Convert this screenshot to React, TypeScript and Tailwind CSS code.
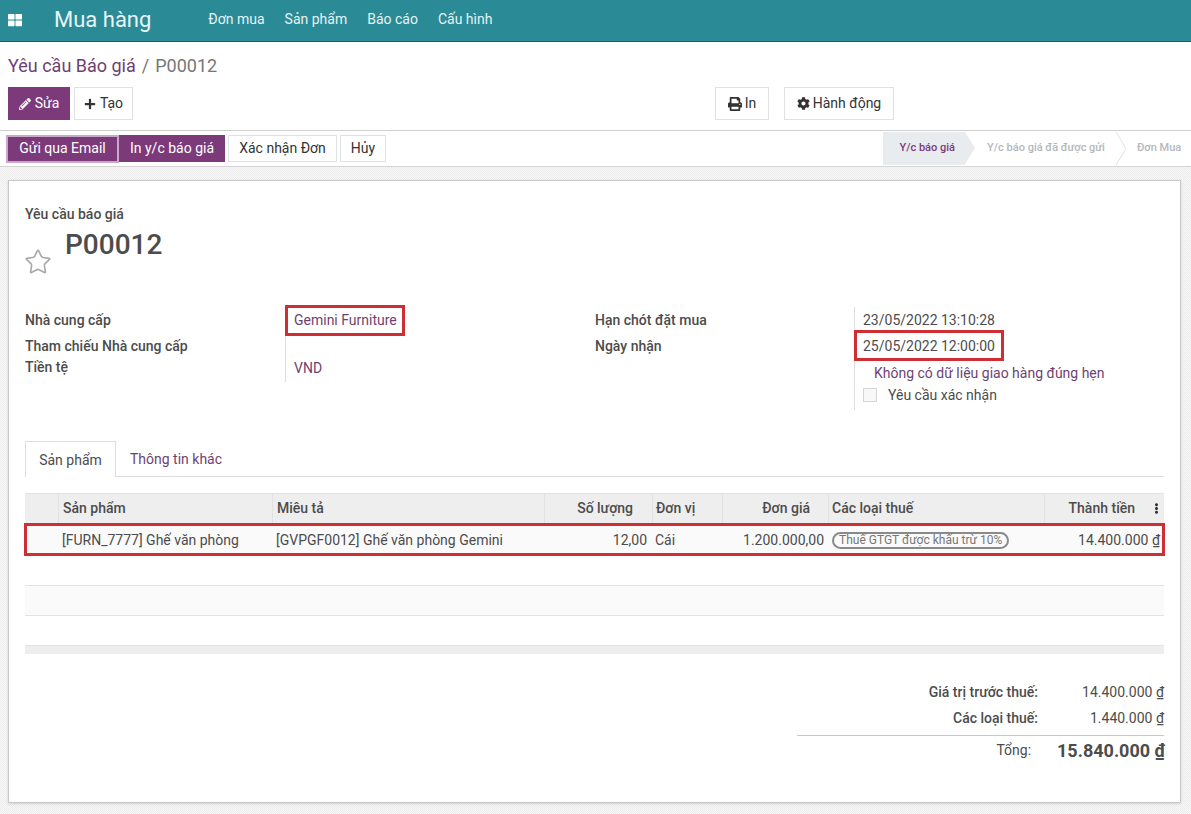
import React from 'react'
import { FaThLarge, FaPencilAlt, FaPlus, FaPrint, FaCog, FaEllipsisV } from 'react-icons/fa'
import { Star } from 'lucide-react'

const GRID = 'grid grid-cols-[34px_214px_272px_108px_70px_106px_216px_119px]'

const Dong = () => <span className="underline">₫</span>

const HeaderCell = ({ label, className = '' }: { label?: string; className?: string }) => (
  <div className={`flex h-full items-center border-r border-[#e2e2e2] pb-[1px] font-medium text-[#4c4c4c] ${className}`}>
    {label}
  </div>
)

export default function App() {
  return (
    <div className="flex h-[814px] w-[1191px] flex-col overflow-hidden bg-white font-['Roboto',sans-serif] text-[14px] text-[#4c4c4c]">
      {/* Top nav */}
      <nav className="flex h-[42px] shrink-0 items-center border-b border-[#1f5f68] bg-[#2a8a96] pb-[2px] text-white">
        <FaThLarge className="ml-[8px] text-[14px]" />
        <span className="ml-[32px] text-[22px] font-normal text-[#e6f6f6]">Mua hàng</span>
        <div className="ml-[57px] flex gap-5 text-[14px] text-[#e6f3f4]">
          <span>Đơn mua</span>
          <span>Sản phẩm</span>
          <span>Báo cáo</span>
          <span>Cấu hình</span>
        </div>
      </nav>

      {/* Control panel */}
      <div className="flex h-[89px] shrink-0 flex-col border-b border-[#cfcfcf] px-2 pt-[12px]">
        <div className="text-[18px] leading-[24px]">
          <span className="text-[#6f3f72]">Yêu cầu Báo giá</span>
          <span className="mx-[6px] text-[#777]">/</span>
          <span className="text-[#777]">P00012</span>
        </div>
        <div className="mt-[9px] flex h-[33px]">
          <button className="flex w-[62px] items-center justify-center gap-1 bg-[#7c3a7a] text-white">
            <FaPencilAlt className="text-[12px] text-[#eee]" /> Sửa
          </button>
          <button className="ml-1 flex w-[59px] items-center justify-center gap-1 border border-[#dee2e6] text-[#333]">
            <FaPlus className="text-[12px]" /> Tạo
          </button>
          <button className="ml-[582px] flex w-[54px] items-center justify-center gap-[3px] border border-[#dee2e6] text-[#333]">
            <FaPrint className="text-[14px]" /> In
          </button>
          <button className="ml-[15px] flex w-[110px] items-center justify-center gap-[3px] border border-[#dee2e6] text-[#333]">
            <FaCog className="text-[13px]" /> Hành động
          </button>
        </div>
      </div>

      {/* Status bar */}
      <div className="flex h-[36px] shrink-0 items-center justify-between border-b border-[#d4d4d4] pl-[6px] pr-[7px]">
        <div className="flex h-[27px] items-center">
          <button className="h-[28px] w-[113px] border-2 border-[#c9a9c9] bg-[#7c3a7a] text-white">Gửi qua Email</button>
          <button className="h-[27px] w-[106px] bg-[#7c3a7a] text-white">In y/c báo giá</button>
          <button className="ml-[3px] h-[27px] w-[109px] border border-[#dee2e6] text-[#333]">Xác nhận Đơn</button>
          <button className="ml-[3px] h-[27px] w-[46px] border border-[#dee2e6] text-[#333]">Hủy</button>
        </div>
        <div className="flex h-[33px] items-center text-[11px] font-medium">
          <div className="relative flex h-full w-[82px] items-center justify-end bg-[#e9ecef] pr-[10px] text-[#7c3a7a]">
            Y/c báo giá
            <span className="absolute -right-[10px] top-0 h-0 w-0 border-y-[16.5px] border-l-[10px] border-y-transparent border-l-[#e9ecef]" />
          </div>
          <div className="flex w-[150px] items-center justify-center pl-[12px] text-[#b4b8bc]">Y/c báo giá đã được gửi</div>
          <svg width="12" height="33" viewBox="0 0 12 33" className="shrink-0">
            <path d="M1 0 L11 16.5 L1 33" fill="none" stroke="#dee2e6" />
          </svg>
          <div className="w-[57px] pl-[10px] text-[#b4b8bc]">Đơn Mua</div>
        </div>
      </div>

      {/* Sheet */}
      <div className="flex-1 bg-[repeating-conic-gradient(#ececec_0_25%,#f8f8f8_0_50%)] bg-[length:2px_2px] px-2 pb-3 pt-[13px]">
        <div className="h-[623px] w-[1173px] border border-[#c8c8c8] bg-white pl-4 pr-4 pt-[25px] shadow-sm">
          <div className="font-medium leading-[16px] text-[#4c4c4c]">Yêu cầu báo giá</div>
          <div className="flex h-[47px] items-start">
            <Star size={28} strokeWidth={1.4} className="-ml-px mt-[26px] shrink-0 text-[#a9a9a9]" />
            <h1 className="ml-[13px] mt-[4px] text-[28px] font-medium leading-[38px] text-[#4c4c4c]">P00012</h1>
          </div>

          {/* Fields */}
          <div className="mt-[38px] flex h-[118px]">
            <div className="flex w-[570px]">
              <div className="w-[260px] font-medium">
                <div className="h-[26px] leading-[26px]">Nhà cung cấp</div>
                <div className="h-[21px] leading-[26px]">Tham chiếu Nhà cung cấp</div>
                <div className="h-[21px] leading-[26px]">Tiền tệ</div>
              </div>
              <div className="h-[75px] border-l border-[#dddddd] pl-[8px] text-[#6f3f72]">
                <div className="inline-flex h-[31px] -translate-x-[9px] -translate-y-[2px] items-center border-[3px] border-[#cf2f33] pb-[2px] pl-[6px] pr-[5px] leading-none">Gemini Furniture</div>
                <div className="mt-[17px] leading-[26px]">VND</div>
              </div>
            </div>
            <div className="flex">
              <div className="w-[259px] font-medium">
                <div className="h-[26px] leading-[26px]">Hạn chót đặt mua</div>
                <div className="h-[26px] leading-[26px]">Ngày nhận</div>
              </div>
              <div className="h-[103px] border-l border-[#dddddd] pl-[8px]">
                <div className="h-[26px] leading-[26px]">23/05/2022 13:10:28</div>
                <div className="inline-flex h-[31px] -translate-x-[9px] -translate-y-[3px] items-center border-[3px] border-[#cf2f33] px-[6px] pt-[2px]">25/05/2022 12:00:00</div>
                <div className="-mt-[1px] ml-[11px] leading-[20px] text-[#6f3f72]">Không có dữ liệu giao hàng đúng hẹn</div>
                <div className="mt-[2px] flex h-[20px] items-center">
                  <span className="h-[14px] w-[14px] border border-[#d5d5d5] bg-[#f8f8f8]" />
                  <span className="ml-[11px]">Yêu cầu xác nhận</span>
                </div>
              </div>
            </div>
          </div>

          {/* Tabs */}
          <div className="mt-[16px] flex h-[36px] border-b border-[#dddddd]">
            <div className="h-[36px] w-[91px] border-x border-t border-[#dddddd] bg-white text-center leading-[37px]">Sản phẩm</div>
            <div className="ml-[14px] leading-[37px] text-[#6f3f72]">Thông tin khác</div>
          </div>

          {/* Lines table */}
          <div className="mt-[16px] w-[1139px]">
            <div className={`${GRID} h-[30px] items-center border-t border-[#e2e2e2] bg-[#eeeeee]`}>
              <HeaderCell />
              <HeaderCell label="Sản phẩm" className="pl-[4px]" />
              <HeaderCell label="Miêu tả" className="pl-[4px]" />
              <HeaderCell label="Số lượng" className="justify-end pr-[19px]" />
              <HeaderCell label="Đơn vị" className="pl-[3px]" />
              <HeaderCell label="Đơn giá" className="justify-end pr-[18px]" />
              <HeaderCell label="Các loại thuế" className="pl-[3px]" />
              <div className="flex h-full items-center justify-end pb-[1px] font-medium">
                <span>Thành tiền</span>
                <FaEllipsisV className="ml-[16px] mr-[2px] text-[11px] text-[#333]" />
              </div>
            </div>
            <div className={`${GRID} -mx-px h-[33px] w-[1141px] items-center border-[3px] border-[#cf2f33] bg-[#fafafa] pt-[1px]`}>
              <div />
              <div className="pl-[1px]">[FURN_7777] Ghế văn phòng</div>
              <div className="pl-[1px]">[GVPGF0012] Ghế văn phòng Gemini</div>
              <div className="pr-[8px] text-right">12,00</div>
              <div>Cái</div>
              <div className="pr-[7px] text-right">1.200.000,00</div>
              <div className="flex pl-[1px]">
                <span className="inline-flex h-[17px] items-center rounded-full border-2 border-[#8a8a8a] px-[5px] text-[12px] leading-none text-[#777]">Thuế GTGT được khấu trừ 10%</span>
              </div>
              <div className="pr-[6px] text-right">14.400.000 <Dong /></div>
            </div>
            <div className="h-[30px] border-b border-[#e2e2e2]" />
            <div className="h-[30px] border-b border-[#e2e2e2] bg-[#fafafa]" />
            <div className="h-[30px] border-b border-[#e2e2e2]" />
            <div className="h-[8px] bg-[#eeeeee]" />
          </div>

          {/* Totals */}
          <div className="ml-auto mt-[26px] w-[367px]">
            <div className="flex h-[24px] items-center justify-end">
              <span className="font-medium">Giá trị trước thuế:</span>
              <span className="w-[126px] text-right">14.400.000 <Dong /></span>
            </div>
            <div className="mt-[2px] flex h-[24px] items-center justify-end">
              <span className="font-medium">Các loại thuế:</span>
              <span className="w-[126px] text-right">1.440.000 <Dong /></span>
            </div>
            <div className="mt-[5px] flex h-[30px] items-center justify-end border-t border-[#c8c8c8] pb-[1px]">
              <span className="mr-[26px]">Tổng:</span>
              <span className="-mr-px text-[18px] font-bold">15.840.000 <Dong /></span>
            </div>
          </div>
        </div>
      </div>
    </div>
  )
}
